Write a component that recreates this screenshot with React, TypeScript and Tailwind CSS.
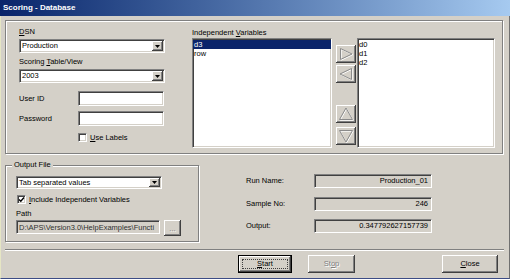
import React from 'react';

const sunken =
  'border border-t-[#808080] border-l-[#808080] border-b-white border-r-white shadow-[inset_1px_1px_0_#404040,inset_-1px_-1px_0_#d4d0c8]';
const raised =
  'bg-[#d4d0c8] shadow-[inset_-1px_-1px_0_#404040,inset_1px_1px_0_#ffffff,inset_-2px_-2px_0_#808080,inset_2px_2px_0_#d4d0c8]';
const etched = 'border border-[#808080] shadow-[inset_1px_1px_0_#ffffff,1px_1px_0_#ffffff]';

const Combo = ({ value, h }: { value: string; h: string }) => (
  <div className={`${sunken} ${h} w-full flex bg-white`}>
    <div className="flex-1 pl-[2px] flex items-center leading-none">{value}</div>
    <div className={`${raised} w-[11px] m-[1px] flex items-center justify-center`}>
      <svg width="5" height="3" viewBox="0 0 5 3">
        <polygon points="0,0 5,0 2.5,3" fill="#000" />
      </svg>
    </div>
  </div>
);

const Check = ({ checked }: { checked?: boolean }) => (
  <div className={`${sunken} w-[9px] h-[9px] bg-white flex items-center justify-center`}>
    {checked && (
      <svg width="7" height="7" viewBox="0 0 7 7">
        <path d="M1 3.5 L2.8 5.3 L6 1.5" stroke="#000" strokeWidth="1.4" fill="none" />
      </svg>
    )}
  </div>
);

const ArrowBtn = ({ pts, mt }: { pts: string; mt: string }) => (
  <div className={`${raised} w-[20px] h-[18px] ${mt}`}>
    <svg width="20" height="18" viewBox="0 0 20 18">
      <polygon points={pts} fill="none" stroke="#ffffff" strokeWidth="1" transform="translate(0.7,0.7)" />
      <polygon points={pts} fill="none" stroke="#8a8a8a" strokeWidth="1" />
    </svg>
  </div>
);

const ListBox = ({ items, selected }: { items: string[]; selected?: number }) => (
  <div className={`${sunken} w-full h-[110px] bg-white pt-[1px]`}>
    {items.map((it, i) => (
      <div
        key={it}
        className={`h-[9px] leading-[9px] pl-[1px] ${i === selected ? 'bg-[#0a246a] text-white' : ''}`}
      >
        {it}
      </div>
    ))}
  </div>
);

export default function App() {
  return (
    <div
      className="w-[510px] h-[279px] bg-[#d4d0c8] flex flex-col text-[7.5px] text-black overflow-hidden"
      style={{ fontFamily: '"Liberation Sans", Arial, sans-serif' }}
    >
      <div className="h-[16px] bg-gradient-to-r from-[#0a246a] to-[#a6caf0] flex items-center pl-[3px] text-white font-bold text-[8px]">
        Scoring - Database
      </div>
      <div className="flex-1 flex flex-col border-l border-l-[#e6e6c4] border-r border-r-[#707070] border-b border-b-[#3c4c86]">
        {/* top group */}
        <div className={`${etched} ml-[4px] mt-[4px] w-[498px] h-[134px] flex items-start`}>
          <div className="w-[146px] ml-[13px] pt-[6px] flex flex-col">
            <div className="h-[10px] leading-[10px]">
              <u>D</u>SN
            </div>
            <div className="mt-[2px]">
              <Combo value="Production" h="h-[14px]" />
            </div>
            <div className="h-[10px] leading-[10px] mt-[4px]">
              Scoring <u>T</u>able/View
            </div>
            <div className="mt-[2px]">
              <Combo value="2003" h="h-[14px]" />
            </div>
            <div className="flex items-center mt-[8px]">
              <div className="w-[59px]">User ID</div>
              <div className={`${sunken} w-[86px] h-[15px] bg-white`} />
            </div>
            <div className="flex items-center mt-[5px]">
              <div className="w-[59px]">Password</div>
              <div className={`${sunken} w-[86px] h-[15px] bg-white`} />
            </div>
            <div className="flex items-center mt-[6px] ml-[59px] gap-[3px]">
              <Check />
              <span>
                <u>U</u>se Labels
              </span>
            </div>
          </div>
          <div className="w-[140px] ml-[27px] pt-[7px] flex flex-col">
            <div className="h-[10px] leading-[10px]">
              Independent <u>V</u>ariables
            </div>
            <ListBox items={['d3', 'row']} selected={0} />
          </div>
          <div className="w-[20px] ml-[4px] pt-[24px] flex flex-col">
            <ArrowBtn pts="4.5,3.5 16,9 4.5,14.5" mt="" />
            <ArrowBtn pts="15.5,3.5 4,9 15.5,14.5" mt="mt-[2px]" />
            <ArrowBtn pts="10,3 3.5,14.5 16.5,14.5" mt="mt-[22px]" />
            <ArrowBtn pts="3.5,3.5 16.5,3.5 10,15" mt="mt-[4px]" />
          </div>
          <div className="w-[138px] ml-[1px] pt-[17px]">
            <ListBox items={['d0', 'd1', 'd2']} />
          </div>
        </div>

        {/* bottom area */}
        <div className="flex items-start">
          <div className={`${etched} relative ml-[4px] mt-[11px] w-[194px] h-[77px] pl-[10px] pt-[10px] flex flex-col`}>
            <span className="absolute left-[6px] top-[-6px] px-[2px] bg-[#d4d0c8] leading-[10px]">Output File</span>
            <div className="w-[146px]">
              <Combo value="Tab separated values" h="h-[13px]" />
            </div>
            <div className="flex items-center mt-[5px] ml-[1px] gap-[3px]">
              <Check checked />
              <span>
                <u>I</u>nclude Independent Variables
              </span>
            </div>
            <div className="h-[10px] leading-[10px] mt-[4px]">Path</div>
            <div className="flex items-start mt-[1px]">
              <div className={`${sunken} w-[144px] h-[14px] pl-[2px] flex items-center whitespace-nowrap text-[#303030]`}>
                D:\APS\Version3.0\HelpExamples\Functi
              </div>
              <div className={`${raised} ml-[4px] w-[17px] h-[16px] flex items-center justify-center text-[#808080] [text-shadow:1px_1px_0_#fff]`}>
                ...
              </div>
            </div>
          </div>
          <div className="ml-[47px] mt-[20px] flex flex-col">
            {[
              ['Run Name:', 'Production_01', ''],
              ['Sample No:', '246', 'mt-[9px]'],
              ['Output:', '0.347792627157739', 'mt-[8px]'],
            ].map(([label, value, mt]) => (
              <div key={label} className={`flex items-center ${mt}`}>
                <div className="w-[68px]">{label}</div>
                <div className={`${sunken} w-[118px] h-[14px] pr-[3px] flex items-center justify-end`}>{value}</div>
              </div>
            ))}
          </div>
        </div>

        <div className="ml-[4px] mt-[7px] w-[499px] h-[2px] border-t border-t-[#808080] border-b border-b-white" />

        <div className="flex items-start mt-[4px]">
          <div className="ml-[237px] w-[54px] h-[18px] border border-black">
            <div className={`${raised} w-full h-full p-[3px]`}>
              <div className="w-full h-full border border-dotted border-[#404040] flex items-center justify-center">
                <span>
                  <u>S</u>tart
                </span>
              </div>
            </div>
          </div>
          <div className={`${raised} ml-[16px] w-[47px] h-[18px] flex items-center justify-center text-[#808080] [text-shadow:1px_1px_0_#fff]`}>
            <span>
              St<u>o</u>p
            </span>
          </div>
          <div className={`${raised} ml-[87px] w-[56px] h-[18px] flex items-center justify-center`}>
            <span>
              <u>C</u>lose
            </span>
          </div>
        </div>
      </div>
    </div>
  );
}
